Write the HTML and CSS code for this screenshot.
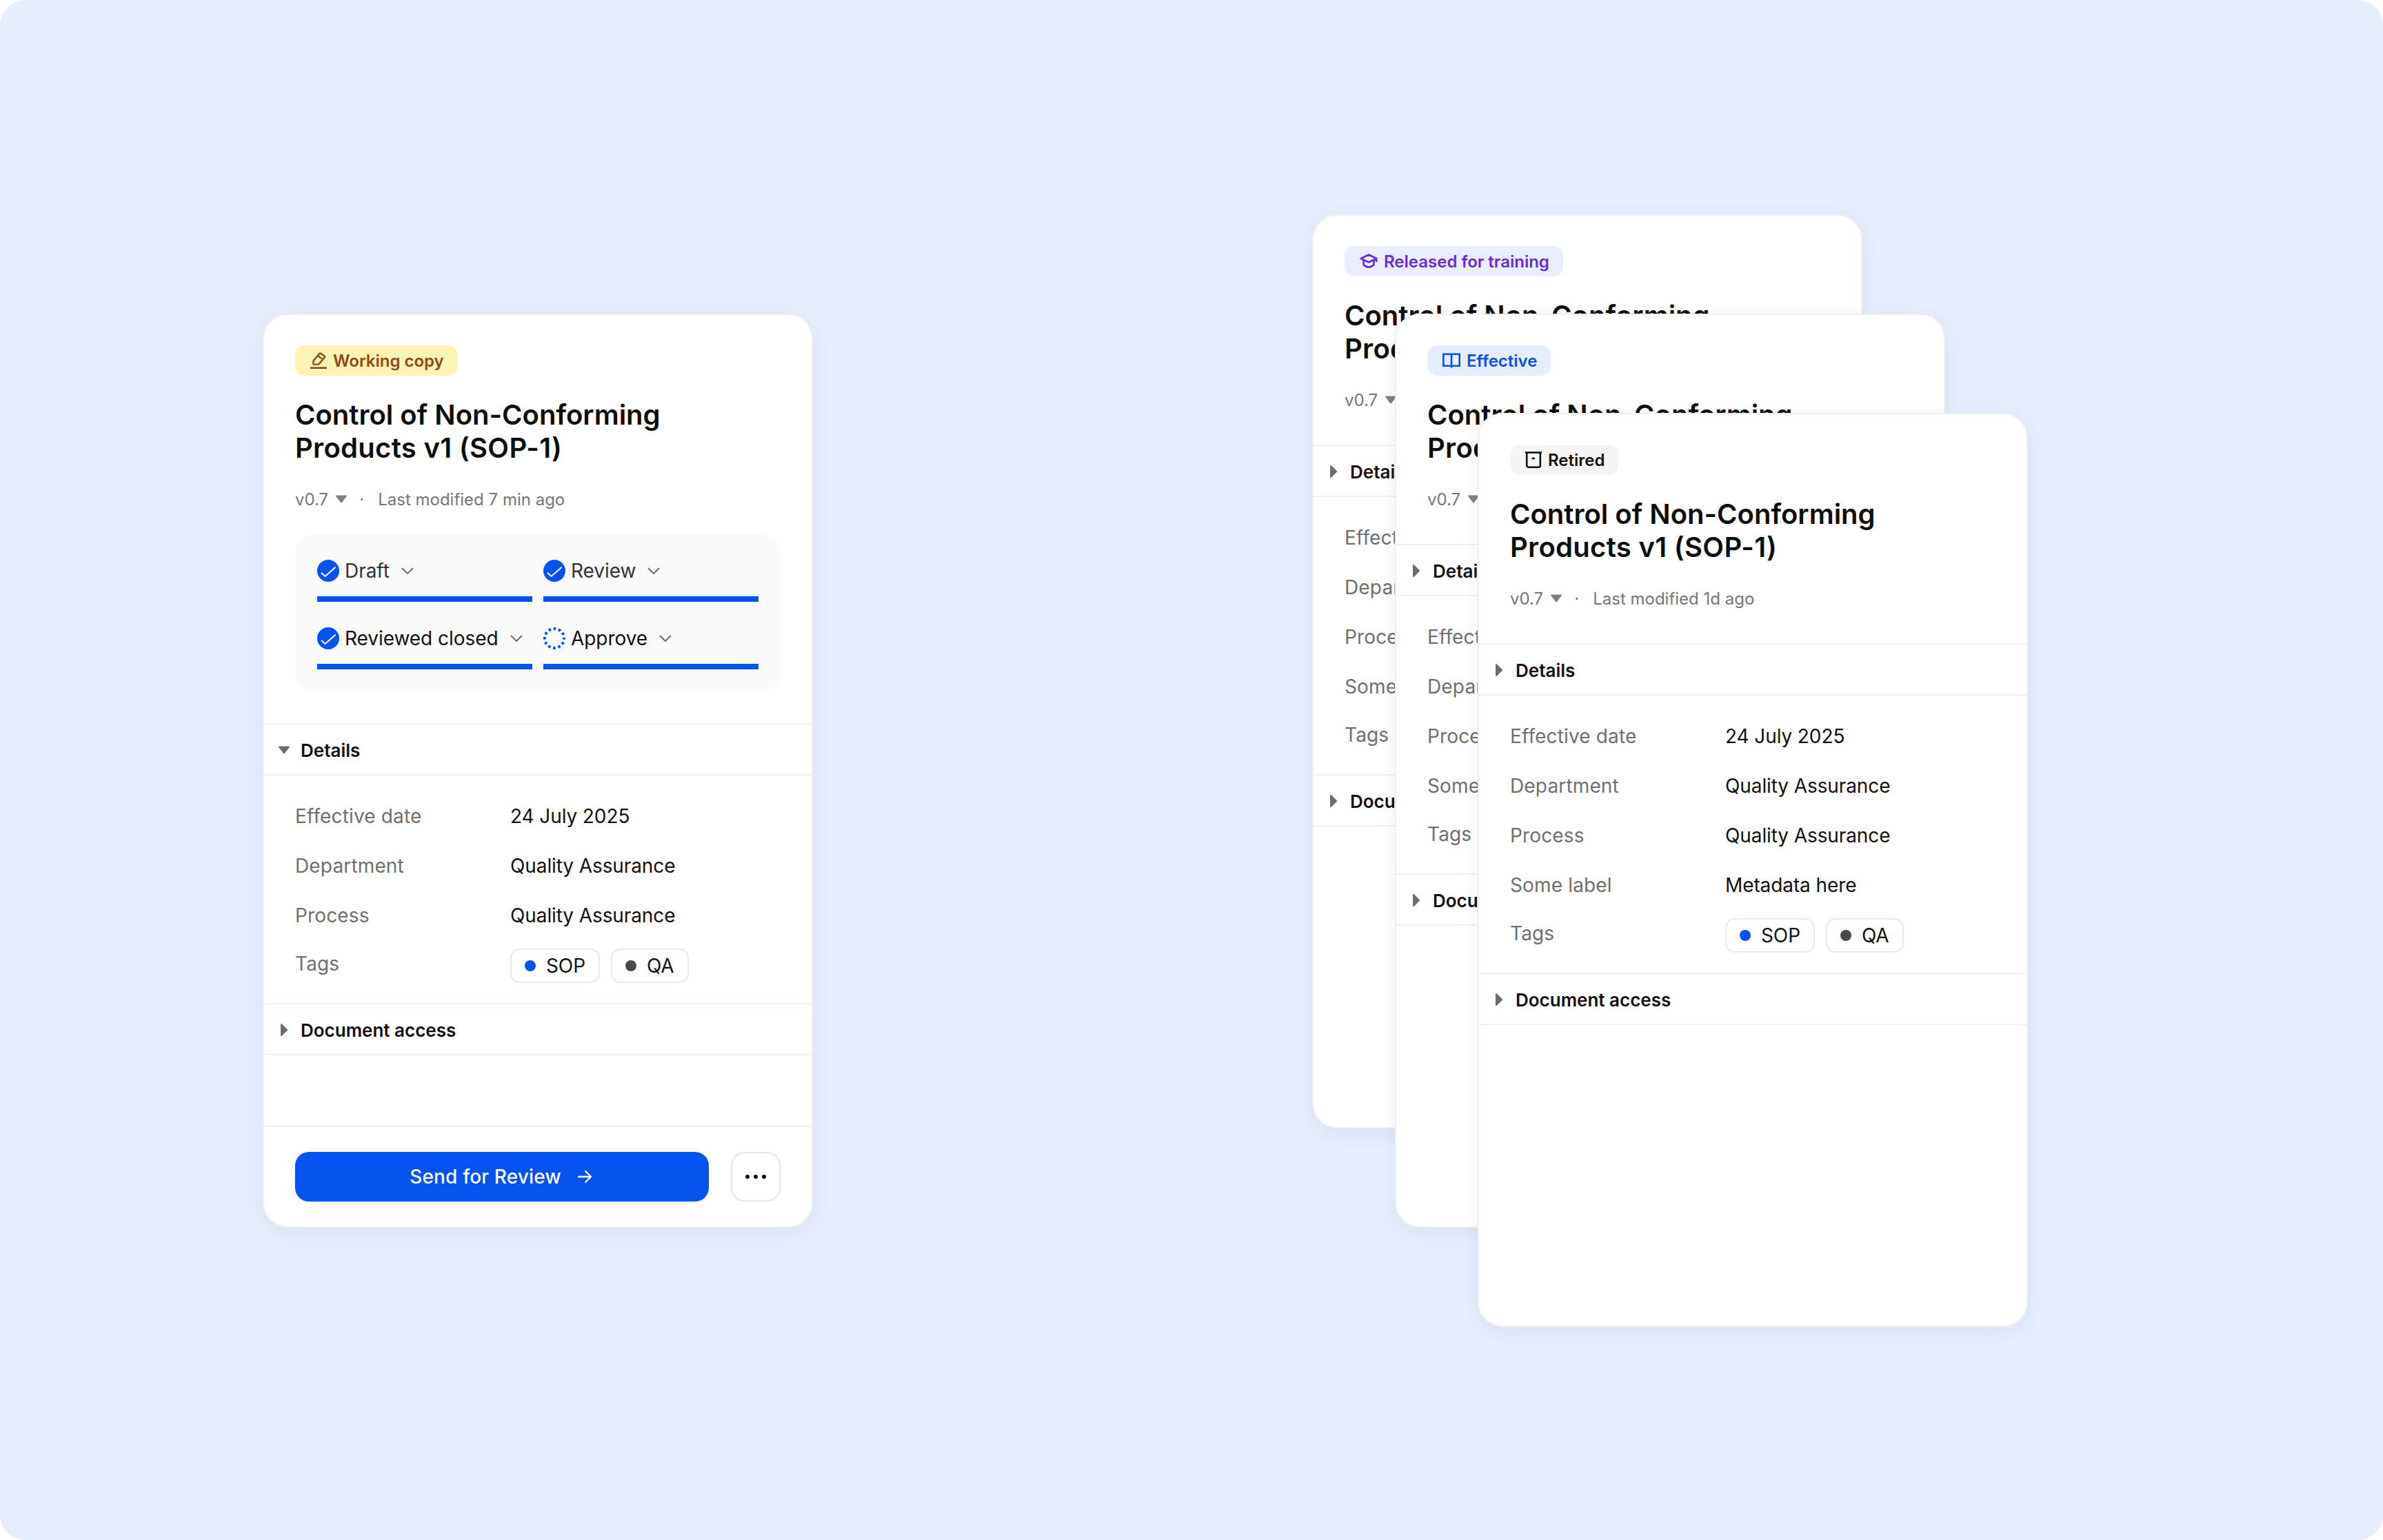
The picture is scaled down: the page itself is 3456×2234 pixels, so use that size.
FILE: index.html
```html
<!DOCTYPE html>
<html lang="en">
<head>
<meta charset="utf-8">
<title>Document cards</title>
<link rel="stylesheet" href="styles.css">
</head>
<body>
<svg class="sprite" aria-hidden="true">
  <symbol id="tri-down" viewBox="0 0 18 12"><path d="M2 1.5h14l-7 9z" fill="currentColor" stroke="currentColor" stroke-width="2" stroke-linejoin="round"/></symbol>
  <symbol id="tri-right" viewBox="0 0 12 20"><path d="M2 2l8 8-8 8z" fill="currentColor" stroke="currentColor" stroke-width="2" stroke-linejoin="round"/></symbol>
  <symbol id="chev" viewBox="0 0 18 10"><path d="M1 1l8 8 8-8" fill="none" stroke="currentColor" stroke-width="2"/></symbol>
  <symbol id="done" viewBox="0 0 32 32"><circle cx="16" cy="16" r="16" fill="#0553ef"/><path d="M6 19l5.6 5L26.6 10.8" fill="none" stroke="#fff" stroke-width="2"/></symbol>
  <symbol id="todo" viewBox="0 0 32 32"><circle cx="16" cy="16" r="14" fill="none" stroke="#0553ef" stroke-width="4" stroke-dasharray="3.6 3.73" stroke-dashoffset="1.8"/></symbol>
  <symbol id="pencil" viewBox="0 0 24 24"><path d="M4.5 17.6v-5L13 2.2q1-1.200 2.200-.4l5.300 3.700q1.200.9.300 2L12 17.600zM10.800 5l7.600 5.400" fill="none" stroke="currentColor" stroke-width="2.400" stroke-linejoin="round"/><path d="M0 22.700h24" stroke="currentColor" stroke-width="2.600"/></symbol>
  <symbol id="cap" viewBox="0 0 26 22"><path d="M13 1.500L24.300 7 13 12.500 1.700 7zM5.500 10v6q7.500 7 15 0v-6M24.300 7v5" fill="none" stroke="currentColor" stroke-width="2.600" stroke-linejoin="round"/></symbol>
  <symbol id="book" viewBox="0 0 26 22"><path d="M1.300 1.800H13v17H1.300zM13 1.800h11.700v17H13M13 18.800V21.500" fill="none" stroke="currentColor" stroke-width="2.600"/></symbol>
  <symbol id="box" viewBox="0 0 24 24"><path d="M0 1.500h24" stroke="currentColor" stroke-width="2.600"/><path d="M2.200 1.500V20a2.700 2.700 0 002.700 2.700h14.200a2.700 2.700 0 002.700-2.700V1.500M9.500 10h4.500" fill="none" stroke="currentColor" stroke-width="2.600"/></symbol>
  <symbol id="arrow" viewBox="0 0 20 20"><path d="M0 10h19M10.500 1.500L19 10l-8.500 8.500" fill="none" stroke="currentColor" stroke-width="2.400"/></symbol>
</svg>

<main class="stage">
  <article class="card card-main">
    <header class="head head-main">
      <span class="badge badge-yellow"><svg class="ic-24"><use href="#pencil"/></svg>Working copy</span>
      <h2 class="title">Control of Non-Conforming<br><span class="title-sub">Products v1 (SOP-1)</span></h2>
      <p class="meta"><span>v0.7</span><svg class="caret"><use href="#tri-down"/></svg><span class="dot">·</span><span>Last modified 7 min ago</span></p>
      <div class="steps">
        <div class="step soft"><div class="step-top"><svg class="step-ic"><use href="#done"/></svg><span>Draft</span><svg class="chev"><use href="#chev"/></svg></div><div class="bar"></div></div>
        <div class="step soft"><div class="step-top"><svg class="step-ic"><use href="#done"/></svg><span>Review</span><svg class="chev"><use href="#chev"/></svg></div><div class="bar"></div></div>
        <div class="step"><div class="step-top"><svg class="step-ic"><use href="#done"/></svg><span>Reviewed closed</span><svg class="chev"><use href="#chev"/></svg></div><div class="bar"></div></div>
        <div class="step"><div class="step-top"><svg class="step-ic"><use href="#todo"/></svg><span>Approve</span><svg class="chev"><use href="#chev"/></svg></div><div class="bar"></div></div>
      </div>
    </header>
    <div class="sec"><svg class="tri-d"><use href="#tri-down"/></svg>Details</div>
    <dl class="rows">
      <div class="row"><dt>Effective date</dt><dd>24 July 2025</dd></div>
      <div class="row"><dt>Department</dt><dd>Quality Assurance</dd></div>
      <div class="row"><dt>Process</dt><dd>Quality Assurance</dd></div>
      <div class="row row-tags"><dt>Tags</dt><dd class="chips"><span class="chip"><i class="pip pip-blue"></i>SOP</span><span class="chip"><i class="pip pip-dark"></i>QA</span></dd></div>
    </dl>
    <div class="sec"><svg class="tri-r"><use href="#tri-right"/></svg>Document access</div>
    <footer class="foot">
      <button class="send">Send for Review<svg class="arrow"><use href="#arrow"/></svg></button>
      <button class="more"><i></i><i></i><i></i></button>
    </footer>
  </article>

  <div class="stack">
    <article class="card card-a">
      <header class="head">
        <span class="badge badge-purple"><svg class="ic-26"><use href="#cap"/></svg>Released for training</span>
        <h2 class="title">Control of Non-Conforming<br><span class="title-sub">Products v1 (SOP-1)</span></h2>
        <p class="meta"><span>v0.7</span><svg class="caret"><use href="#tri-down"/></svg><span class="dot">·</span><span>Last modified 1d ago</span></p>
      </header>
      <div class="sec"><svg class="tri-r"><use href="#tri-right"/></svg>Details</div>
      <dl class="rows">
        <div class="row"><dt>Effective date</dt><dd>24 July 2025</dd></div>
        <div class="row"><dt>Department</dt><dd>Quality Assurance</dd></div>
        <div class="row"><dt>Process</dt><dd>Quality Assurance</dd></div>
        <div class="row"><dt>Some label</dt><dd>Metadata here</dd></div>
        <div class="row row-tags"><dt>Tags</dt><dd class="chips"><span class="chip"><i class="pip pip-blue"></i>SOP</span><span class="chip"><i class="pip pip-dark"></i>QA</span></dd></div>
      </dl>
      <div class="sec"><svg class="tri-r"><use href="#tri-right"/></svg>Document access</div>
    </article>

    <article class="card card-b">
      <header class="head">
        <span class="badge badge-blue"><svg class="ic-26"><use href="#book"/></svg>Effective</span>
        <h2 class="title">Control of Non-Conforming<br><span class="title-sub">Products v1 (SOP-1)</span></h2>
        <p class="meta"><span>v0.7</span><svg class="caret"><use href="#tri-down"/></svg><span class="dot">·</span><span>Last modified 1d ago</span></p>
      </header>
      <div class="sec"><svg class="tri-r"><use href="#tri-right"/></svg>Details</div>
      <dl class="rows">
        <div class="row"><dt>Effective date</dt><dd>24 July 2025</dd></div>
        <div class="row"><dt>Department</dt><dd>Quality Assurance</dd></div>
        <div class="row"><dt>Process</dt><dd>Quality Assurance</dd></div>
        <div class="row"><dt>Some label</dt><dd>Metadata here</dd></div>
        <div class="row row-tags"><dt>Tags</dt><dd class="chips"><span class="chip"><i class="pip pip-blue"></i>SOP</span><span class="chip"><i class="pip pip-dark"></i>QA</span></dd></div>
      </dl>
      <div class="sec"><svg class="tri-r"><use href="#tri-right"/></svg>Document access</div>
    </article>

    <article class="card card-c">
      <header class="head">
        <span class="badge badge-grey"><svg class="ic-24"><use href="#box"/></svg>Retired</span>
        <h2 class="title">Control of Non-Conforming<br><span class="title-sub">Products v1 (SOP-1)</span></h2>
        <p class="meta"><span>v0.7</span><svg class="caret"><use href="#tri-down"/></svg><span class="dot">·</span><span>Last modified 1d ago</span></p>
      </header>
      <div class="sec"><svg class="tri-r"><use href="#tri-right"/></svg>Details</div>
      <dl class="rows">
        <div class="row"><dt>Effective date</dt><dd>24 July 2025</dd></div>
        <div class="row"><dt>Department</dt><dd>Quality Assurance</dd></div>
        <div class="row"><dt>Process</dt><dd>Quality Assurance</dd></div>
        <div class="row"><dt>Some label</dt><dd>Metadata here</dd></div>
        <div class="row row-tags"><dt>Tags</dt><dd class="chips"><span class="chip"><i class="pip pip-blue"></i>SOP</span><span class="chip"><i class="pip pip-dark"></i>QA</span></dd></div>
      </dl>
      <div class="sec"><svg class="tri-r"><use href="#tri-right"/></svg>Document access</div>
    </article>
  </div>
</main>
</body>
</html>
```

FILE: styles.css
```css
* { box-sizing: border-box; }

html, body {
  margin: 0;
  background: #fff;
}

body {
  width: 3456px;
  height: 2234px;
  overflow: hidden;
  font-family: Inter, "Noto Sans", sans-serif;
  color: #0f0f0f;
}

.sprite {
  display: none;
}

.stage {
  display: flex;
  align-items: flex-start;
  width: 3456px;
  height: 2234px;
  padding: 455px 0 0 381px;
  background: #e6edfb;
  border-radius: 36px;
}

.stack {
  position: relative;
  width: 1038px;
  height: 1614px;
  margin: -144px 0 0 724px;
}

.card {
  display: flex;
  flex-direction: column;
  width: 798px;
  height: 1326px;
  background: #fff;
  border: 2px solid #eff0f3;
  border-radius: 36px;
  box-shadow: 0 6px 28px rgba(40, 50, 80, .06);
}

.card-a, .card-b, .card-c {
  position: absolute;
}
.card-a { left: 0; top: 0; }
.card-b { left: 120px; top: 144px; }
.card-c { left: 240px; top: 288px; }

.head {
  display: flex;
  flex-direction: column;
  align-items: flex-start;
  height: 332px;
  padding: 44px 45px 0;
}

.head-main {
  height: 592px;
}

.badge {
  display: inline-flex;
  align-items: center;
  height: 44px;
  padding: 0 20px 0 22px;
  gap: 9px;
  border-radius: 14px;
  font-size: 24px;
  font-weight: 600;
  white-space: nowrap;
}

.badge-yellow { background: #fdf3b4; color: #8c4b14; }
.badge-purple { background: #e8eefd; color: #6b2bd9; }
.badge-blue { background: #e6edfb; color: #0553ef; }
.badge-grey { background: #f5f5f5; color: #111; }

.ic-24 { width: 24px; height: 24px; }
.ic-26 { width: 26px; height: 22px; }

.title {
  margin: 33px 0 0;
  font-size: 40px;
  line-height: 48px;
  font-weight: 600;
  color: #0d0d0d;
}

.title-sub {
  letter-spacing: .3px;
}

.meta {
  display: flex;
  align-items: center;
  margin: 32px 0 0;
  height: 36px;
  font-size: 24px;
  color: #767676;
}

.caret {
  width: 18px;
  height: 12px;
  margin-left: 10px;
  color: #808080;
}

.dot {
  width: 44px;
  padding-right: 3px;
  text-align: center;
}

.steps {
  display: grid;
  grid-template-columns: 312px 312px;
  column-gap: 16px;
  row-gap: 32px;
  width: 704px;
  margin-top: 33px;
  padding: 32px;
  background: #fafafa;
  border-radius: 28px;
}

.step-top {
  display: flex;
  align-items: center;
  height: 42px;
  font-size: 28px;
  letter-spacing: -.05px;
  color: #111;
}

.soft .step-top { color: #333; }

.step-ic {
  width: 32px;
  height: 32px;
  margin-right: 8px;
  flex: none;
}

.chev {
  width: 18px;
  height: 10px;
  margin-left: 17px;
  color: #6e6e6e;
  flex: none;
}

.bar {
  height: 8px;
  margin-top: 16px;
  background: #0553ef;
}

.sec {
  display: flex;
  align-items: center;
  height: 76px;
  padding: 3px 0 0 53px;
  position: relative;
  flex: none;
  border-top: 2px solid #f0f0f0;
  border-bottom: 2px solid #f0f0f0;
  font-size: 26px;
  font-weight: 600;
  color: #0f0f0f;
}

.tri-d, .tri-r {
  position: absolute;
  color: #6c6c6c;
}

.tri-d { left: 20px; top: 31px; width: 18px; height: 12px; }
.tri-r { left: 23px; top: 27px; width: 12px; height: 20px; }

.rows {
  display: flex;
  flex-direction: column;
  gap: 24px;
  margin: 0;
  padding: 35px 45px 29px;
}

.row {
  display: flex;
  height: 48px;
  align-items: center;
  font-size: 28px;
}

.row dt {
  width: 312px;
  flex: none;
  letter-spacing: .15px;
  color: #6f6f6f;
}

.row dd {
  margin: 0;
  letter-spacing: -.1px;
  color: #111;
}

.row-tags {
  height: 50px;
  align-items: flex-start;
}

.row-tags dt {
  line-height: 44px;
}

.chips {
  display: flex;
  gap: 16px;
}

.chip {
  display: inline-flex;
  align-items: center;
  gap: 15px;
  height: 50px;
  padding: 0 19px;
  background: #fff;
  border: 2px solid #e8e8e8;
  border-radius: 14px;
  font-size: 28px;
}

.pip {
  width: 16px;
  height: 16px;
  border-radius: 50%;
}

.pip-blue { background: #0553ef; }
.pip-dark { background: #454b4a; }

.foot {
  display: flex;
  gap: 32px;
  margin-top: auto;
  padding: 36px 45px;
  border-top: 2px solid #f0f0f0;
}

.send {
  display: flex;
  align-items: center;
  justify-content: center;
  gap: 24px;
  width: 600px;
  height: 72px;
  padding: 0 4px 0 0;
  background: #0553ef;
  border: 0;
  border-radius: 20px;
  color: #fff;
  font: 500 28px Inter, "Noto Sans", sans-serif;
  letter-spacing: .15px;
}

.arrow {
  width: 20px;
  height: 20px;
}

.more {
  display: flex;
  align-items: center;
  justify-content: center;
  gap: 6px;
  width: 72px;
  height: 72px;
  padding: 0;
  background: #fff;
  border: 2px solid #e6e6e6;
  border-radius: 20px;
}

.more i {
  width: 6px;
  height: 6px;
  background: #111;
  border-radius: 50%;
}
```
